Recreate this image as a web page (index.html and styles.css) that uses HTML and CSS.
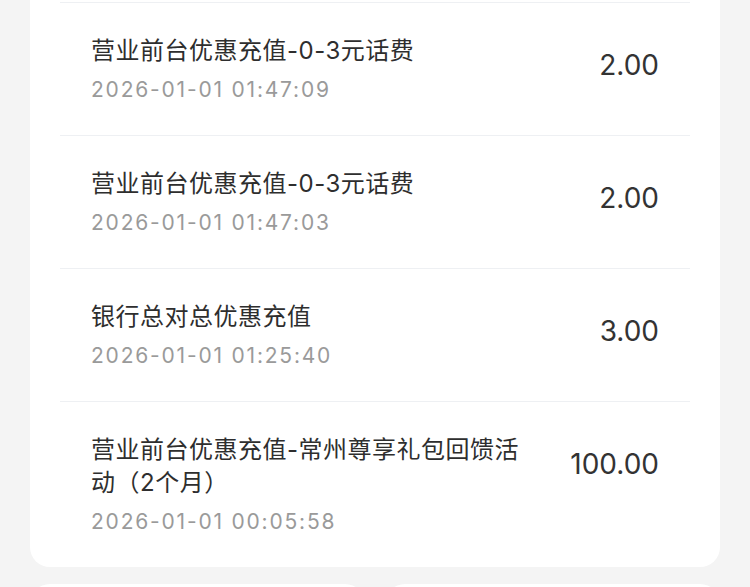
FILE: index.html
```html
<!DOCTYPE html>
<html>
<head>
    <title>话费充值记录</title>
    <meta charset="UTF-8">
    <link rel="stylesheet" href="styles.css">
</head>
<body>
    <div class="page">
        <!-- Record list (scrolled, top cut off) -->
        <div class="record-card">
            <div class="record-item">
                <div class="record-info">
                    <div class="record-title">营业前台优惠充值-0-3元话费</div>
                    <div class="record-time">2026-01-01 01:47:09</div>
                </div>
                <div class="record-amount">2.00</div>
            </div>
            <div class="record-item">
                <div class="record-info">
                    <div class="record-title">营业前台优惠充值-0-3元话费</div>
                    <div class="record-time">2026-01-01 01:47:03</div>
                </div>
                <div class="record-amount">2.00</div>
            </div>
            <div class="record-item">
                <div class="record-info">
                    <div class="record-title">银行总对总优惠充值</div>
                    <div class="record-time">2026-01-01 01:25:40</div>
                </div>
                <div class="record-amount">3.00</div>
            </div>
            <div class="record-item">
                <div class="record-info">
                    <div class="record-title">营业前台优惠充值-常州尊享礼包回馈活动（2个月）</div>
                    <div class="record-time">2026-01-01 00:05:58</div>
                </div>
                <div class="record-amount">100.00</div>
            </div>
        </div>

        <!-- Next section, mostly below the fold -->
        <div class="bottom-row">
            <div class="bottom-card"></div>
            <div class="bottom-card"></div>
        </div>
    </div>
</body>
</html>
```

FILE: styles.css
```css
body {
    margin: 0;
    padding: 0;
    background-color: #f4f4f4;
    font-family: Inter, "Noto Sans CJK SC", sans-serif;
    color: #333;
    overflow: hidden;
}
.page {
    padding: 0 30px;
}
.record-card {
    background-color: #fff;
    border-radius: 0 0 20px 20px;
    padding-top: 2px;
}
.record-item {
    display: flex;
    align-items: flex-start;
    margin: 0 30px;
    padding: 31px 31px 31px 31px;
    border-top: 1px solid #eef0f3;
}
.record-info {
    flex: 1;
    min-width: 0;
}
.record-title {
    font-size: 24px;
    line-height: 33px;
    letter-spacing: 0.5px;
    color: #2e2e2e;
}
.record-time {
    margin-top: 9px;
    font-size: 21px;
    line-height: 28px;
    letter-spacing: 1.8px;
    color: #9a9a9a;
}
.record-amount {
    flex-shrink: 0;
    margin-top: 15px;
    margin-left: 40px;
    font-size: 28px;
    line-height: 33px;
    color: #333;
}

/* --- bottom cards --- */
.bottom-row {
    display: flex;
    gap: 20px;
    margin-top: 17px;
}
.bottom-card {
    flex: 1;
    height: 80px;
    background-color: #fff;
    border-radius: 20px;
}
```
